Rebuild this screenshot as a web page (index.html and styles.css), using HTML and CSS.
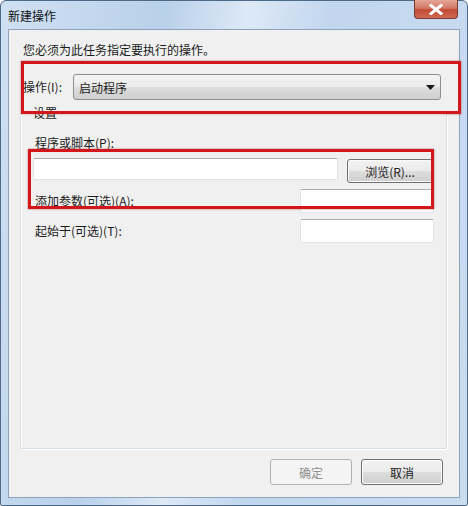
FILE: index.html
```html
<!DOCTYPE html>
<html lang="zh-CN">
<head>
<meta charset="utf-8">
<title>新建操作</title>
<link rel="stylesheet" href="styles.css">
</head>
<body>
<div class="window">
  <div class="titlebar">
    <span class="title">新建操作</span>
    <div class="close">
      <svg width="14" height="11" viewBox="0 0 14 11"><path d="M2 1.5 L12 9.5 M12 1.5 L2 9.5" stroke="#fff" stroke-width="3" stroke-linecap="square"/></svg>
    </div>
  </div>
  <div class="client">
    <p class="intro">您必须为此任务指定要执行的操作。</p>
    <div class="action-row">
      <span class="lbl">操作(I):</span>
      <div class="combo">
        <span>启动程序</span>
        <svg width="9" height="5" viewBox="0 0 9 5"><path d="M0 0 H9 L4.5 5 Z" fill="#1a1a1a"/></svg>
      </div>
    </div>
    <fieldset class="settings">
      <legend>设置</legend>
      <div class="field-label">程序或脚本(P):</div>
      <div class="prog-row">
        <div class="input prog"></div>
        <div class="btn browse">浏览(R)...</div>
      </div>
      <div class="opt-row first">
        <span class="lbl">添加参数(可选)(A):</span>
        <div class="input opt"></div>
      </div>
      <div class="opt-row">
        <span class="lbl">起始于(可选)(T):</span>
        <div class="input opt"></div>
      </div>
    </fieldset>
    <div class="footer">
      <div class="btn disabled">确定</div>
      <div class="btn">取消</div>
    </div>
  </div>
  <div class="highlight hl-action"></div>
  <div class="highlight hl-program"></div>
</div>
</body>
</html>
```
FILE: styles.css
```css
* { box-sizing: border-box; }
html, body { margin: 0; padding: 0; }
body {
  font-family: "Noto Sans CJK SC", "Liberation Sans", sans-serif;
  font-size: 12px;
  color: #1b1b1b;
  background: #fff;
}
.window {
  position: relative;
  width: 468px;
  height: 506px;
  background: linear-gradient(100deg, #cfe0f2 0%, #b9d0ea 30%, #dde9f6 45%, #c1d6ee 60%, #cadcf0 100%);
  border: 1px solid #4f6a86;
  border-radius: 6px 6px 2px 2px;
  display: flex;
  flex-direction: column;
}
.titlebar {
  height: 28px;
  display: flex;
  justify-content: space-between;
  align-items: flex-start;
  padding-left: 7px;
  padding-right: 9px;
}
.title {
  line-height: 16px;
  margin-top: 7px;
  color: #101010;
}
.close {
  width: 44px;
  height: 19px;
  margin-top: -1px;
  border: 1px solid #7a3a30;
  border-top: none;
  border-radius: 0 0 4px 4px;
  background: linear-gradient(#e6a596 0%, #d37a68 45%, #c24a36 55%, #cf6a52 100%);
  display: flex;
  align-items: center;
  justify-content: center;
}
.client {
  margin: 0 7px 0 7px;
  height: 469px;
  background: #f0f0f0;
  border: 1px solid #8da3bb;
  display: flex;
  flex-direction: column;
}
.intro {
  margin: 12px 0 0 14px;
  line-height: 16px;
}
.action-row {
  display: flex;
  align-items: center;
  margin: 16px 0 0 14px;
}
.lbl { line-height: 16px; }
.combo {
  margin-left: 11px;
  width: 368px;
  height: 26px;
  border: 1px solid #8e8f8f;
  border-radius: 3px;
  background: linear-gradient(#f3f3f3 0%, #ebebeb 48%, #dddddd 52%, #cfcfcf 100%);
  display: flex;
  align-items: center;
  justify-content: space-between;
  padding: 0 5px 0 5px;
}
.settings {
  margin: 5px 0 0 11px;
  width: 427px;
  height: 344px;
  border: 1px solid #d5dfe5;
  box-shadow: inset 1px 1px 0 #fff, 1px 1px 0 #fff;
  border-radius: 2px;
  padding: 0 12px;
}
.settings legend {
  margin-left: -2px;
  padding: 0 2px;
  line-height: 16px;
}
.field-label {
  margin: 14px 0 0 2px;
  line-height: 16px;
}
.prog-row {
  display: flex;
  align-items: flex-start;
  gap: 9px;
  margin-top: 7px;
}
.input {
  background: #fff;
  border: 1px solid #e2e3ea;
  border-top-color: #abadb3;
  border-radius: 2px;
}
.input.prog { width: 305px; height: 22px; }
.btn {
  width: 86px;
  height: 24px;
  border: 1px solid #707070;
  border-radius: 3px;
  background: linear-gradient(#f2f2f2 0%, #ebebeb 48%, #dddddd 52%, #cfcfcf 100%);
  box-shadow: inset 0 0 0 1px #fcfcfc;
  display: flex;
  align-items: center;
  justify-content: center;
  margin-top: 1px;
}
.opt-row {
  display: flex;
  justify-content: space-between;
  align-items: center;
  margin-top: 6px;
  padding-left: 2px;
}
.opt-row.first { margin-top: 6px; }
.input.opt { width: 134px; height: 24px; }
.footer {
  display: flex;
  justify-content: flex-end;
  gap: 9px;
  margin: 10px 16px 0 0;
}
.footer .btn { width: 82px; height: 26px; margin-top: 0; }
.btn.disabled {
  color: #8f8f8f;
  border-color: #adb2b5;
  background: #f4f4f4;
  box-shadow: none;
}
.highlight {
  position: absolute;
  border: 3px solid #d3161a;
  box-shadow: 0 0 2px rgba(120, 0, 0, 0.5);
}
.hl-action { left: 20px; top: 60px; width: 440px; height: 53px; }
.hl-program { left: 27px; top: 148px; width: 406px; height: 60px; }
```
